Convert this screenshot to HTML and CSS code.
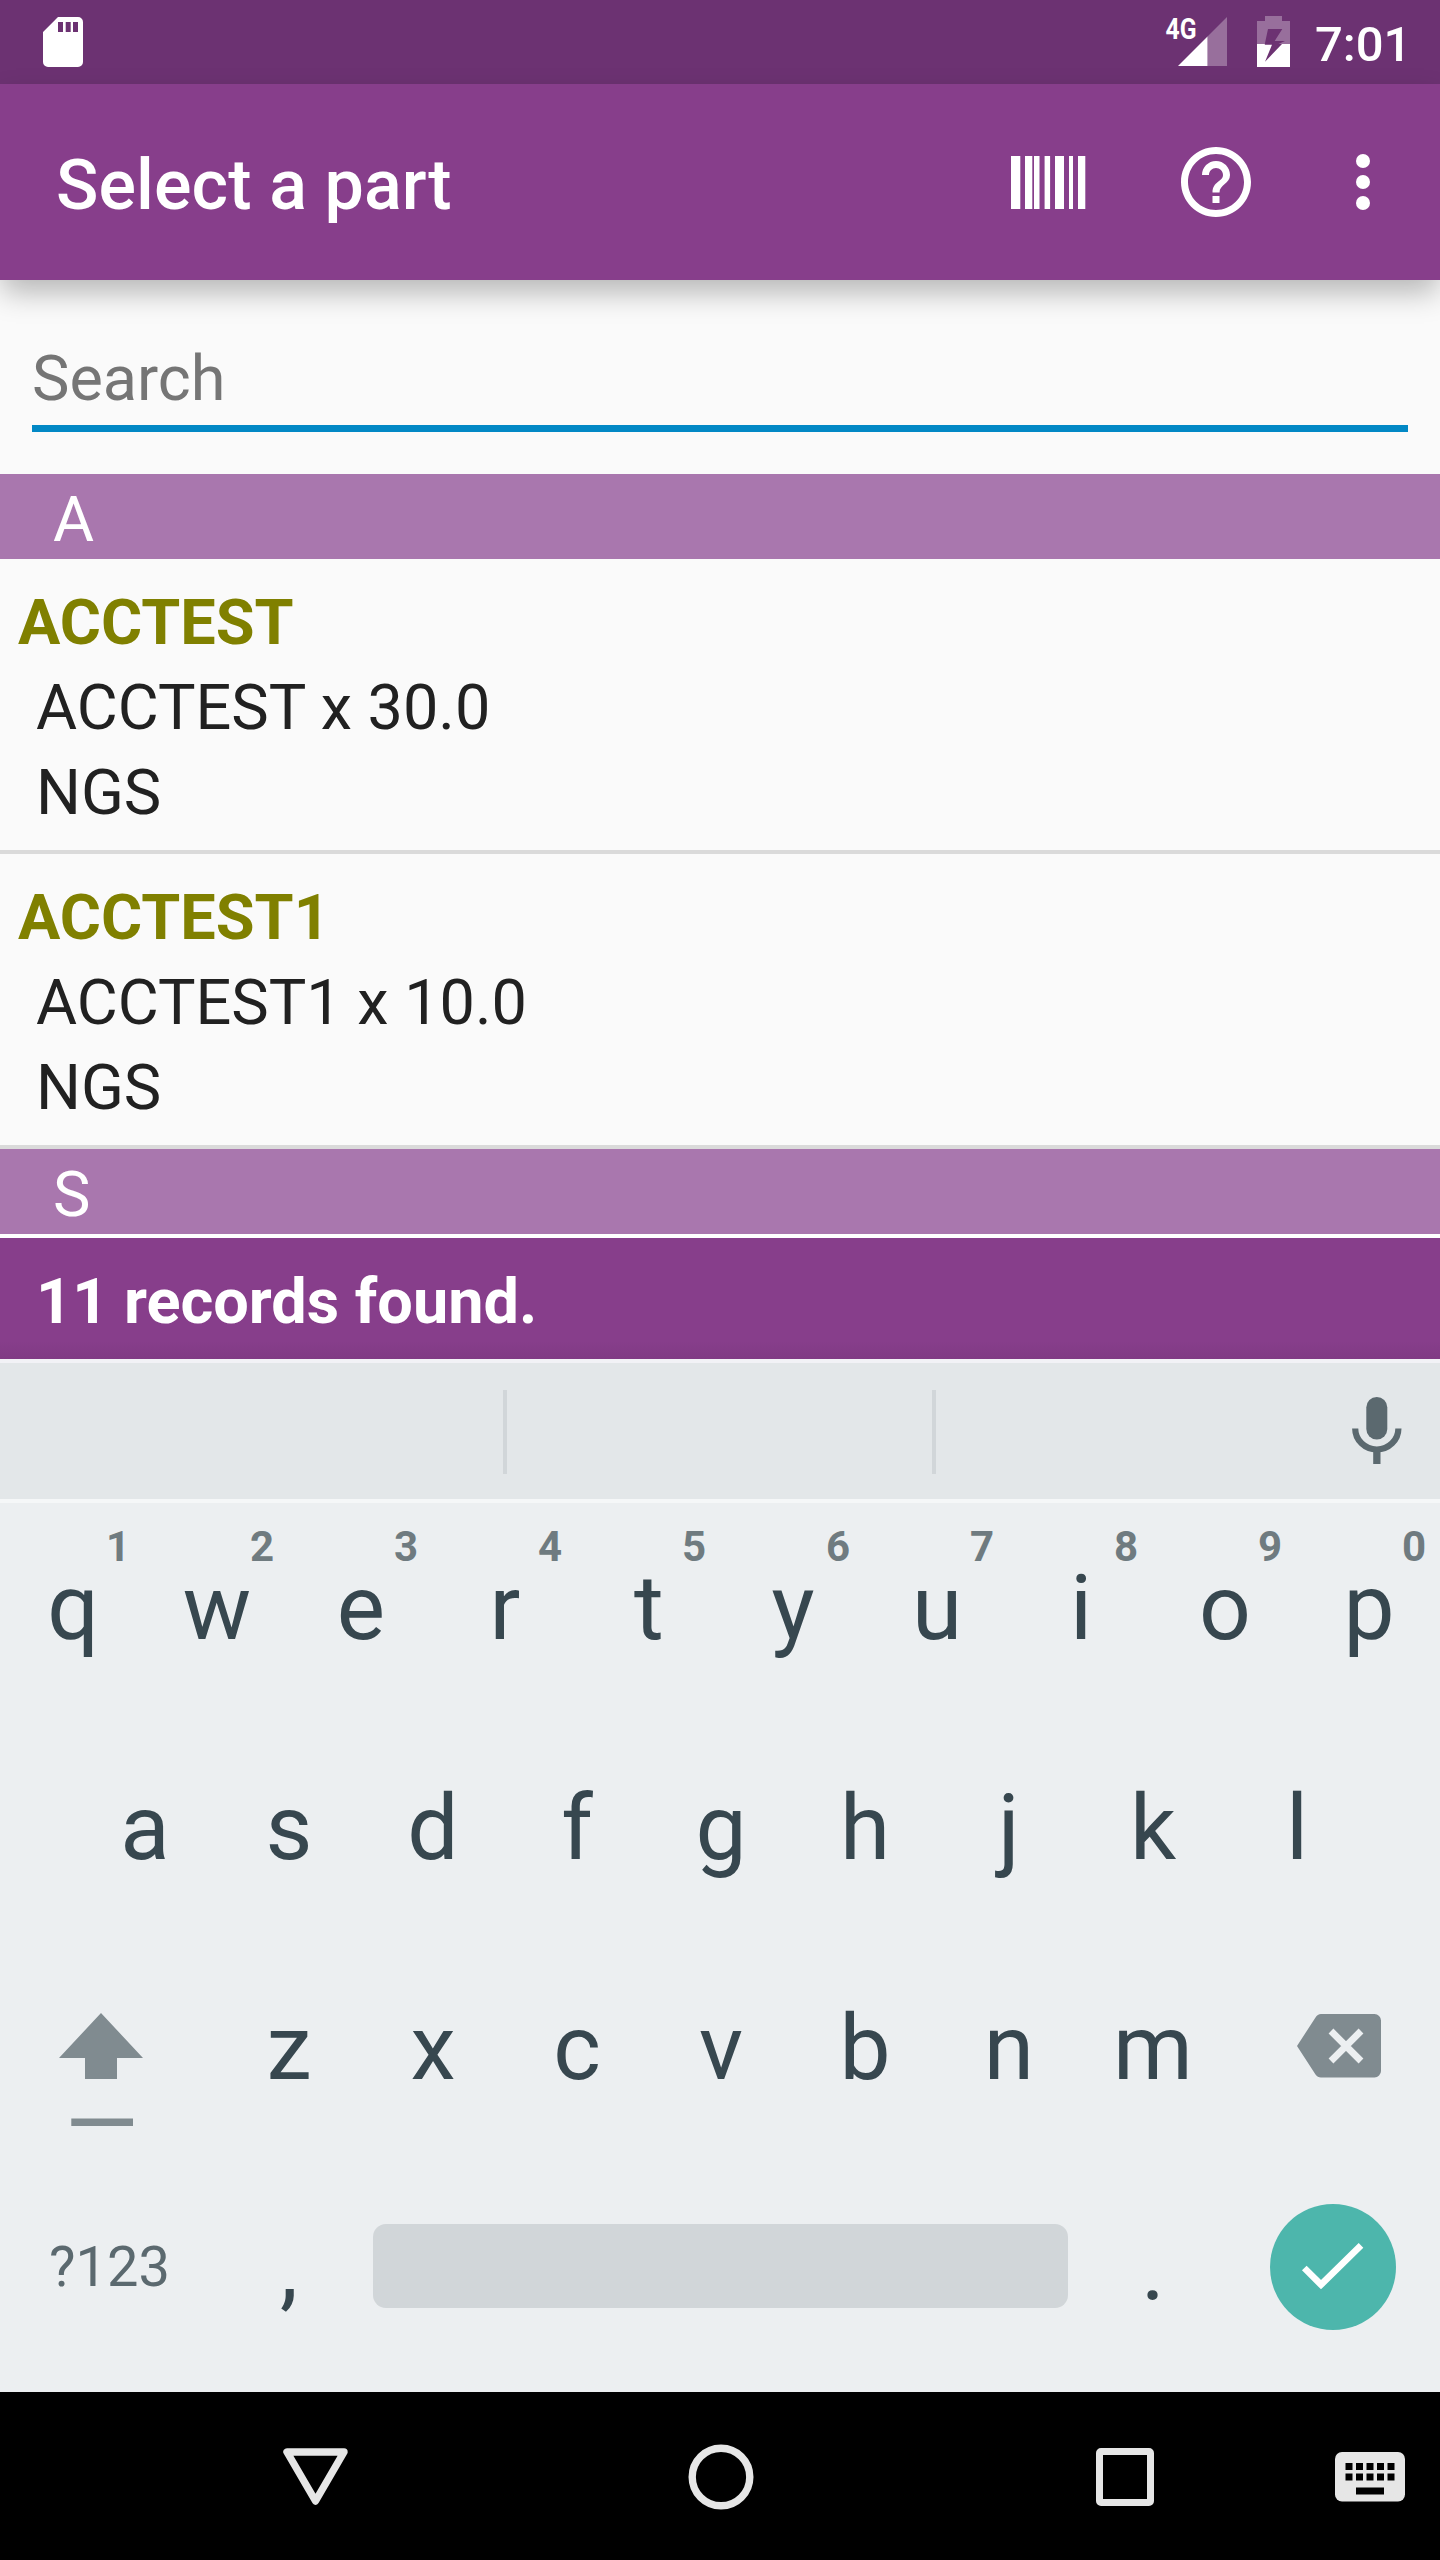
FILE: index.html
```html
<!DOCTYPE html>
<html lang="en">
<head>
<meta charset="utf-8">
<title>Select a part</title>
<link rel="stylesheet" href="styles.css">
</head>
<body>
<div class="screen">
  <header class="status">
    <svg class="sd" width="40" height="50" viewBox="0 0 40 50"><path fill="#fff" fill-rule="evenodd" d="M15 0H35a5 5 0 0 1 5 5V45a5 5 0 0 1-5 5H5a5 5 0 0 1-5-5V15ZM15 5V15H20V5ZM22.700 5V15H27.700V5ZM30 5V15H35V5Z"/></svg>
    <svg class="signal" width="66" height="56" viewBox="-4 -6 66 56"><path fill="#fff" fill-opacity=".3" d="M61 0V49H41.500V19.500Z"/><path fill="#fff" d="M12 49L41.500 19.500V49Z"/><text class="net" x="-.5" y="22" textLength="31" lengthAdjust="spacingAndGlyphs">4G</text></svg>
    <svg class="battery" width="33" height="51" viewBox="0 0 33 51"><path fill="#fff" fill-opacity=".3" fill-rule="evenodd" d="M8 0H25V5H33V28H21.500L28 25H17.700L25.300 13H11L7.800 28H0V5H8Z"/><path fill="#fff" d="M0 28H7.800V28.700H15L8 45.700L25 28H33V51H0Z"/></svg>
    <span class="clock">7:01</span>
  </header>
  <div class="appbar">
    <h1>Select a part</h1>
    <svg class="barcode" width="75" height="53" viewBox="0 0 75 53"><path fill="#fff" d="M0 0h9.300v53H0zM14 0h7.300v53H14zM23 0h5.500v53H23zM33.600 0h5.500v53h-5.500zM44 0h9v53h-9zM58 0h4v53h-4zM67 0h7.300v53H67z"/></svg>
    <svg class="help" width="84" height="84" viewBox="0 0 24 24"><path fill="#fff" d="M11 18h2v-2h-2v2zm1-16C6.480 2 2 6.480 2 12s4.480 10 10 10 10-4.480 10-10S17.520 2 12 2zm0 18c-4.410 0-8-3.590-8-8s3.590-8 8-8 8 3.590 8 8-3.590 8-8 8zm0-14c-2.210 0-4 1.790-4 4h2c0-1.100.9-2 2-2s2 .9 2 2c0 2-3 1.750-3 5h2c0-2.250 3-2.500 3-5 0-2.210-1.790-4-4-4z"/></svg>
    <svg class="more" width="14" height="56" viewBox="0 0 14 56"><g fill="#fff"><circle cx="7" cy="7" r="7"/><circle cx="7" cy="28" r="7"/><circle cx="7" cy="49" r="7"/></g></svg>
  </div>
  <main class="content">
    <div class="search">Search</div>
    <div class="section">A</div>
    <article class="item"><h2>ACCTEST</h2><p>ACCTEST x 30.0</p><p>NGS</p></article>
    <article class="item"><h2>ACCTEST1</h2><p>ACCTEST1 x 10.0</p><p>NGS</p></article>
    <div class="section">S</div>
  </main>
  <div class="found">11 records found.</div>
  <div class="suggest">
    <i></i><i></i>
    <svg class="mic" width="50" height="67" viewBox="0 0 50 67"><rect x="14.300" y="0" width="21" height="42.500" rx="10.500" fill="#5b696f"/><path d="M3.200 31.500a21.600 21 0 0 0 43.200 0" fill="none" stroke="#5b696f" stroke-width="6.200"/><path d="M21.200 53h7.300v14h-7.300z" fill="#5b696f"/></svg>
  </div>
  <div class="keyboard">
    <div class="row">
      <span class="key">q<sup>1</sup></span><span class="key">w<sup>2</sup></span><span class="key">e<sup>3</sup></span><span class="key">r<sup>4</sup></span><span class="key">t<sup>5</sup></span><span class="key">y<sup>6</sup></span><span class="key">u<sup>7</sup></span><span class="key">i<sup>8</sup></span><span class="key">o<sup>9</sup></span><span class="key">p<sup>0</sup></span>
    </div>
    <div class="row">
      <span class="key">a</span><span class="key">s</span><span class="key">d</span><span class="key">f</span><span class="key">g</span><span class="key">h</span><span class="key">j</span><span class="key">k</span><span class="key">l</span>
    </div>
    <div class="row">
      <span class="wide shift"><svg width="84" height="114" viewBox="0 0 84 114"><path fill="#808b90" d="M42 0L84 45H58V66H26V45H0ZM12.300 105.500H74V113H12.300Z"/></svg></span>
      <span class="key">z</span><span class="key">x</span><span class="key">c</span><span class="key">v</span><span class="key">b</span><span class="key">n</span><span class="key">m</span>
      <span class="wide del"><svg width="84" height="64" viewBox="0 0 84 64"><path fill="#808b90" d="M24 0H77.500a6.500 6.500 0 0 1 6.500 6.500V57a6.500 6.500 0 0 1-6.500 6.500H24Q20.500 63.500 18.500 60.500L0 32L18.500 3.500Q20.500 0 24 0Z"/><path d="M34 17L64 47M64 17L34 47" stroke="#eceff1" stroke-width="6.800"/></svg></span>
    </div>
    <div class="row">
      <span class="wide sym">?123</span><span class="key">,</span><span class="space"></span><span class="key">.</span>
      <span class="wide enter"><svg width="126" height="126" viewBox="0 0 126 126"><circle cx="63" cy="63" r="63" fill="#4db6ac"/><path d="M34.300 64L51 80.700L91 41.300" fill="none" stroke="#fff" stroke-width="6.600"/></svg></span>
    </div>
  </div>
  <nav class="nav">
    <svg class="back" width="65" height="57" viewBox="0 0 65 57"><path d="M4 4H61L32.500 53Z" fill="none" stroke="#e6e6e6" stroke-width="7.400" stroke-linejoin="round"/></svg>
    <svg class="home" width="66" height="66" viewBox="0 0 66 66"><circle cx="33" cy="33" r="28.800" fill="none" stroke="#e6e6e6" stroke-width="7.400"/></svg>
    <svg class="recent" width="58" height="58" viewBox="0 0 58 58"><path fill="#e6e6e6" fill-rule="evenodd" d="M5 0H53a5 5 0 0 1 5 5V53a5 5 0 0 1-5 5H5a5 5 0 0 1-5-5V5a5 5 0 0 1 5-5ZM7 7V51H51V7Z"/></svg>
    <svg class="ime" width="70" height="50" viewBox="0 0 70 50"><rect width="70" height="49.500" rx="7" fill="#e6e6e6"/><path fill="#000" d="M10.500 11h7v7h-7zM21 11h7v7h-7zM31.500 11h7v7h-7zM42 11h7v7h-7zM52.500 11h7v7h-7zM10.500 21.500h7v7h-7zM21 21.500h7v7h-7zM31.500 21.500h7v7h-7zM42 21.500h7v7h-7zM52.500 21.500h7v7h-7zM21 35.500h28v7h-28z"/></svg>
  </nav>
</div>
</body>
</html>
```

FILE: styles.css
```css
* { box-sizing: border-box; margin: 0; padding: 0; }
body { font-family: Roboto, "Noto Sans", sans-serif; background: #fafafa; }
svg { display: block; flex: none; }
.screen { width: 1440px; height: 2560px; overflow: hidden; display: flex; flex-direction: column; }
.screen > * { flex: none; }

.status { height: 84px; background: #6c3272; display: flex; padding: 0 33px 0 43px; color: #fff; }
.sd { margin-top: 17px; }
.signal { margin: 11px 0 0 auto; overflow: visible; }
.net { font-size: 30px; font-weight: 700; fill: #fff; }
.battery { margin: 16px 0 0 29px; }
.clock { width: 92px; margin-left: 25px; font-size: 49px; font-weight: 500; line-height: 89px; white-space: nowrap; }

.appbar { height: 196px; background: #873e8b; display: flex; align-items: center; padding: 0 70px 0 56px; color: #fff; position: relative; box-shadow: 0 14px 28px -2px rgba(0, 0, 0, .28); }
h1 { font-size: 70px; font-weight: 500; line-height: 80px; letter-spacing: .1px; flex: 1; padding-top: 5px; }
.barcode { margin-right: 88px; }
.help { margin-right: 98px; }

.content { height: 958px; border-bottom: 4px solid #fff; overflow: hidden; }
.search { height: 152px; margin: 0 32px 42px; padding-top: 56px; border-bottom: 7px solid #0288c5; color: #757575; font-size: 63px; line-height: 85px; }
.section { height: 85px; padding: 3px 0 0 53px; background: #a977ae; color: #fff; font-size: 63px; line-height: 85px; }
.item { height: 295px; padding: 21px 0 0 36px; border-bottom: 4px solid #dadada; font-size: 63px; line-height: 85px; color: #212121; }
.item h2 { font-size: 63px; font-weight: 700; color: #808000; margin-left: -18px; }

.found { height: 121px; padding-left: 36px; background: linear-gradient(#873e8b 85%, #803a84); color: #fff; font-size: 63px; font-weight: 700; line-height: 127px; }

.suggest { height: 144px; background: #e3e7e9; border-top: 4px solid #f2f2f6; border-bottom: 4px solid #f5f7f8; display: flex; align-items: flex-start; padding-right: 38px; }
.suggest i { width: 4px; height: 84px; background: #d1d6d9; margin: 27px 0 0 425px; }
.suggest i:first-child { margin-left: 503px; }
.mic { margin: 34px 0 0 auto; }

.keyboard { height: 889px; background: #eceff1; color: #37474f; }
.row { height: 220px; display: flex; justify-content: center; font-size: 91px; line-height: 210px; }
.key { width: 144px; text-align: center; position: relative; padding-left: 2px; }
.key sup { position: absolute; right: 14px; top: 20px; font-size: 42px; line-height: 48px; font-weight: 700; color: #6f7b80; }
.wide { width: 216px; }
.shift { padding: 70px 0 0 59px; }
.del { padding: 71px 0 0 73px; }
.sym { font-size: 56px; line-height: 209px; padding-left: 49px; color: #5b696f; }
.space { width: 695px; height: 84px; margin: 61px 12px 0 13px; border-radius: 13px; background: #d1d6d9; }
.enter { padding: 41px 0 0 46px; }

.nav { height: 168px; background: #000; display: flex; align-items: center; padding: 1px 0 0 283px; }
.home { margin-left: 340px; }
.recent { margin-left: 342px; }
.ime { margin-left: 181px; }
```
